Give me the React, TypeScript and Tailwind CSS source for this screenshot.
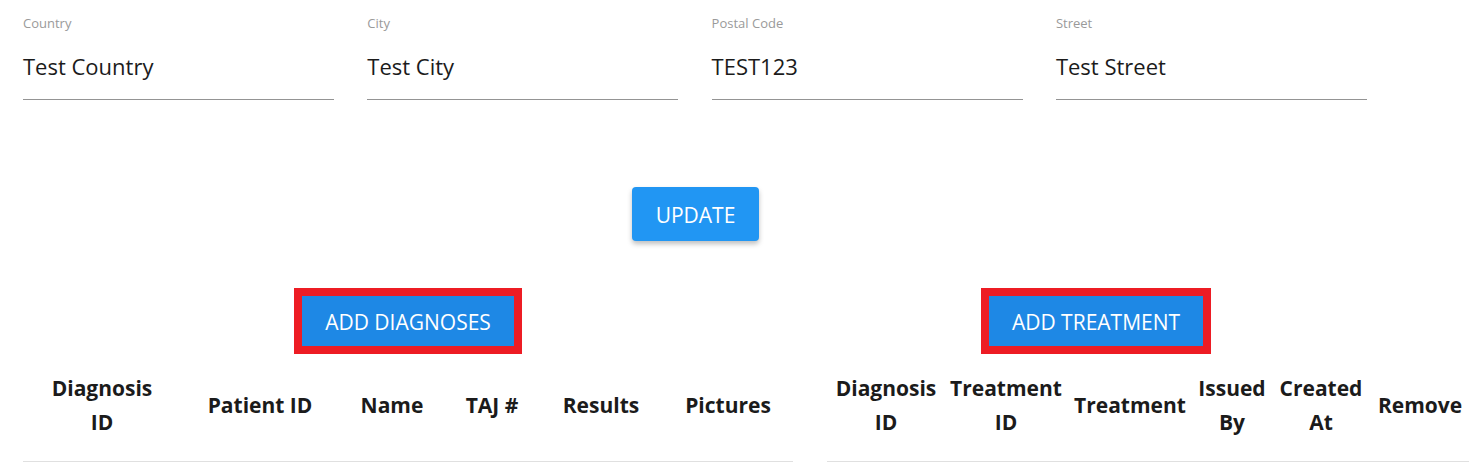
import React from 'react';

const fields = [
  { label: 'Country', value: 'Test Country' },
  { label: 'City', value: 'Test City' },
  { label: 'Postal Code', value: 'TEST123' },
  { label: 'Street', value: 'Test Street' },
];

const diagnosisCols = [
  { w: 'w-[158px]', lines: ['Diagnosis', 'ID'] },
  { w: 'w-[158px]', lines: ['Patient ID'] },
  { w: 'w-[106px]', lines: ['Name'] },
  { w: 'w-[94px]', lines: ['TAJ #'] },
  { w: 'w-[124px]', lines: ['Results'] },
  { w: 'w-[130px]', lines: ['Pictures'] },
];

const treatmentCols = [
  { w: 'w-[118px]', lines: ['Diagnosis', 'ID'] },
  { w: 'w-[122px]', lines: ['Treatment', 'ID'] },
  { w: 'w-[126px]', lines: ['Treatment'] },
  { w: 'w-[78px]', lines: ['Issued', 'By'] },
  { w: 'w-[100px]', lines: ['Created', 'At'] },
  { w: 'w-[98px]', lines: ['Remove'] },
];

type Col = { w: string; lines: string[] };

const HeaderTable = ({ cols }: { cols: Col[] }) => (
  <table className="table-fixed border-collapse">
    <thead>
      <tr>
        {cols.map((c, i) => (
          <th
            key={i}
            className={`${c.w} px-0 pt-[7px] pb-[22px] border-b border-[#e0e0e0] text-center align-middle text-[21px] leading-[34px] font-bold text-[#1b1b1b]`}
          >
            {c.lines.map((l, j) => (
              <div key={j}>{l}</div>
            ))}
          </th>
        ))}
      </tr>
    </thead>
  </table>
);

const OutlinedButton = ({ label }: { label: string }) => (
  <div className="border-[8px] border-[#ed1c24]">
    <button className="h-[50px] px-[23px] pt-[3px] bg-[#1e88e5] text-white text-[21px] uppercase">
      {label}
    </button>
  </div>
);

export default function App() {
  return (
    <div className="bg-white w-[1482px] h-[470px] overflow-hidden" style={{ fontFamily: '"Open Sans", "Noto Sans", sans-serif' }}>
      <div className="flex gap-[33.3px] pl-[23px] pt-[13px]">
        {fields.map((f) => (
          <div key={f.label} className="w-[311px] border-b border-[#949494]">
            <div className="text-[13px] leading-[20px] text-[#9a9a9a]">{f.label}</div>
            <div className="pt-[17px] pb-[17px] text-[22px] leading-[32px] text-[#1b1b1b]">{f.value}</div>
          </div>
        ))}
      </div>

      <div className="flex pl-[632px] pt-[87px]">
        <button className="h-[54px] w-[127px] pt-[3px] rounded bg-[#2196f3] text-white text-[21px] uppercase shadow-[0_3px_5px_rgba(0,0,0,0.25)]">
          Update
        </button>
      </div>

      <div className="flex pl-[23px] pt-[47px] gap-[34px]">
        <div className="w-[770px] flex flex-col items-center">
          <OutlinedButton label="Add Diagnoses" />
          <div className="pt-[10px]">
            <HeaderTable cols={diagnosisCols} />
          </div>
        </div>
        <div className="w-[645px] flex flex-col">
          <div className="w-[538px] flex justify-center">
            <OutlinedButton label="Add Treatment" />
          </div>
          <div className="pt-[10px]">
            <HeaderTable cols={treatmentCols} />
          </div>
        </div>
      </div>
    </div>
  );
}
